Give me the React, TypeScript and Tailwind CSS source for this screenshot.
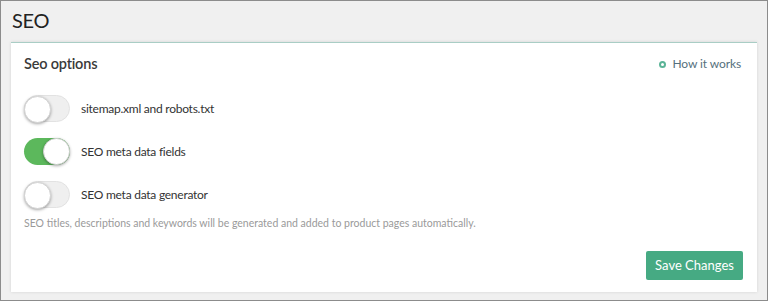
import React from "react";

function Toggle({ on }: { on: boolean }) {
  return (
    <div
      className={
        "relative h-[27px] w-[46px] shrink-0 rounded-full " +
        (on ? "bg-[#5cb85c]" : "bg-[#efefef] border border-[#e2e2e2]")
      }
    >
      <div
        className={
          "absolute top-0 h-[27px] w-[27px] rounded-full bg-white border border-[#d4d4d4] shadow-[0_1px_3px_rgba(0,0,0,0.35)] " +
          (on ? "right-0" : "-left-px -top-px")
        }
      />
    </div>
  );
}

export default function App() {
  const font = { fontFamily: "Lato, 'Open Sans', sans-serif" };
  return (
    <div
      className="w-[768px] h-[301px] bg-[#f0f0f0] border border-[#8c8c8c] flex flex-col"
      style={font}
    >
      <div className="h-[41px] pl-[11px] pt-[5px] text-[20px] tracking-[-0.3px] text-[#222] leading-[28px]">SEO</div>
      <div className="mx-[10px] h-[250px] bg-white border-t border-[#a9cdc5] shadow-[0_0_3px_rgba(0,0,0,0.12)] flex flex-col px-[13px]">
        <div className="flex items-center justify-between pt-[8px] h-[34px]">
          <div className="text-[14.5px] font-semibold tracking-[-0.2px] text-[#3a3a3a]">Seo options</div>
          <div className="flex items-center gap-[6px] pr-[3px] text-[12px] tracking-[-0.1px] text-[#55707d]">
            <span className="block h-[7px] w-[7px] rounded-full border-[2px] border-[#5bb497]" />
            How it works
          </div>
        </div>
        <div className="mt-[18px] flex flex-col gap-[16px]">
          <div className="flex items-center gap-[11px]">
            <Toggle on={false} />
            <span className="text-[12px] tracking-[-0.25px] text-[#333]">sitemap.xml and robots.txt</span>
          </div>
          <div className="flex items-center gap-[11px]">
            <Toggle on={true} />
            <span className="text-[12px] tracking-[-0.25px] text-[#333]">SEO meta data fields</span>
          </div>
          <div className="flex items-center gap-[11px]">
            <Toggle on={false} />
            <span className="text-[12px] tracking-[-0.25px] text-[#333]">SEO meta data generator</span>
          </div>
        </div>
        <div className="mt-[8px] text-[10.5px] text-[#9a9a9a]">
          SEO titles, descriptions and keywords will be generated and added to product pages automatically.
        </div>
        <div className="flex justify-end mt-[19px] pr-[1px]">
          <button className="h-[29px] w-[97px] bg-[#46aa83] text-white text-[13px] rounded-[2px]">
            Save Changes
          </button>
        </div>
      </div>
    </div>
  );
}
